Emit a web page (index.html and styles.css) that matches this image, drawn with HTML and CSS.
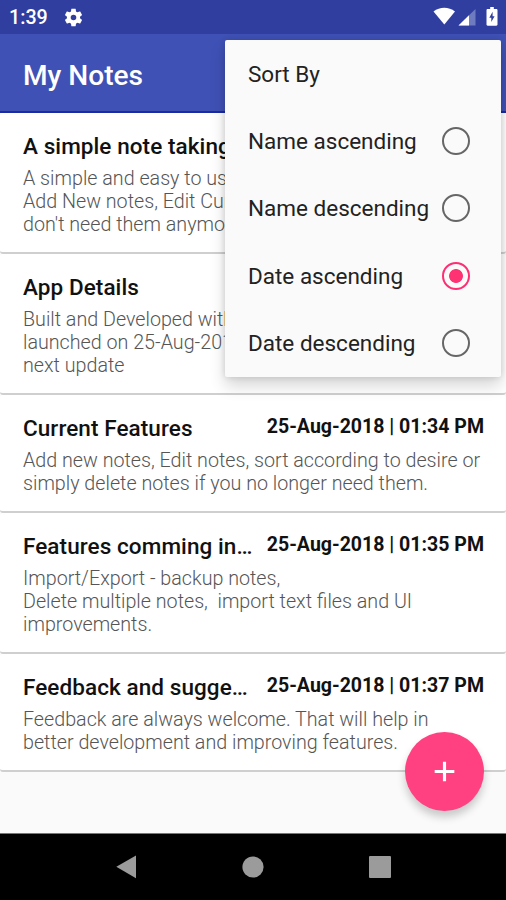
FILE: index.html
```html
<!DOCTYPE html>
<html lang="en">
<head>
<meta charset="utf-8">
<title>My Notes</title>
<link rel="stylesheet" href="styles.css">
</head>
<body>
<div class="phone">
  <div class="statusbar">
    <span class="clock">1:39</span>
    <svg class="gear" viewBox="0 0 24 24"><path fill="#fff" d="M19.43 12.98c.04-.32.07-.64.07-.98s-.03-.66-.07-.98l2.11-1.65c.19-.15.24-.42.12-.64l-2-3.46c-.12-.22-.39-.3-.61-.22l-2.49 1c-.52-.4-1.08-.73-1.69-.98l-.38-2.65C14.46 2.18 14.25 2 14 2h-4c-.25 0-.46.18-.49.42l-.38 2.65c-.61.25-1.17.59-1.69.98l-2.49-1c-.23-.09-.49 0-.61.22l-2 3.46c-.13.22-.07.49.12.64l2.11 1.65c-.04.32-.07.65-.07.98s.03.66.07.98l-2.11 1.65c-.19.15-.24.42-.12.64l2 3.46c.12.22.39.3.61.22l2.49-1c.52.4 1.08.73 1.69.98l.38 2.65c.03.24.24.42.49.42h4c.25 0 .46-.18.49-.42l.38-2.65c.61-.25 1.17-.59 1.69-.98l2.49 1c.23.09.49 0 .61-.22l2-3.46c.12-.22.07-.49-.12-.64l-2.11-1.65zM12 15.2a3.2 3.2 0 1 1 0-6.4 3.2 3.2 0 0 1 0 6.4z"/></svg>
    <svg class="tray" viewBox="0 0 66 22">
      <path fill="#fff" d="M.5 5.600C7 .6 15.500.6 22 5.600L11.300 18.500z"/>
      <path fill="#6f7bc0" d="M42.500 3v16.500H25.500z"/><path fill="#fff" d="M36 9.300v10.200H25.500z"/>
      <path fill="#fff" d="M57.200 1h3.600v2h2.500c.7 0 1.200.5 1.200 1.200v14.300c0 .7-.5 1.200-1.200 1.200h-8.600c-.7 0-1.200-.5-1.200-1.200V4.200C53.500 3.500 54 3 54.700 3h2.500z"/>
      <path fill="#303f9f" d="M59.600 5.700l-3.300 6h2v4.200l3.300-5.700h-2z"/>
    </svg>
  </div>
  <header class="appbar">My Notes</header>
  <main class="notes">
    <article class="note">
      <div class="head"><h2>A simple note taking</h2></div>
      <p>A simple and easy to use<br>Add New notes, Edit Current<br>don't need them anymore</p>
    </article>
    <article class="note">
      <div class="head"><h2>App Details</h2></div>
      <p>Built and Developed with<br>launched on 25-Aug-2018<br>next update</p>
    </article>
    <article class="note">
      <div class="head"><h2>Current Features</h2><time>25-Aug-2018 | 01:34 PM</time></div>
      <p>Add new notes, Edit notes, sort according to desire or<br>simply delete notes if you no longer need them.</p>
    </article>
    <article class="note">
      <div class="head"><h2>Features comming in…</h2><time>25-Aug-2018 | 01:35 PM</time></div>
      <p>Import/Export - backup notes,<br>Delete multiple notes, &nbsp;import text files and UI<br>improvements.</p>
    </article>
    <article class="note">
      <div class="head"><h2>Feedback and sugge…</h2><time>25-Aug-2018 | 01:37 PM</time></div>
      <p>Feedback are always welcome. That will help in<br>better development and improving features.</p>
    </article>
  </main>
  <nav class="navbar">
    <svg viewBox="0 0 24 24"><path d="M2.300 11.800L22 .5v22.800z"/></svg>
    <svg viewBox="0 0 24 24"><circle cx="12" cy="12" r="10.600"/></svg>
    <svg viewBox="0 0 24 24"><rect x="1" y="1" width="22" height="22" rx="1"/></svg>
  </nav>
  <div class="menu">
    <div class="item">Sort By</div>
    <div class="item">Name ascending<span class="radio"></span></div>
    <div class="item">Name descending<span class="radio"></span></div>
    <div class="item">Date ascending<span class="radio on"></span></div>
    <div class="item">Date descending<span class="radio"></span></div>
  </div>
  <button class="fab" aria-label="Add"><svg viewBox="0 0 22 22"><path d="M11 .7v20.600M.7 11h20.600" stroke="#fff" stroke-width="3.300"/></svg></button>
</div>
</body>
</html>
```
FILE: styles.css
```css
* { box-sizing: border-box; }
body { margin: 0; font-family: Roboto, sans-serif; }
.phone {
  position: relative;
  width: 506px;
  height: 900px;
  overflow: hidden;
  display: flex;
  flex-direction: column;
  background: #fafafa;
}
.statusbar {
  height: 34px;
  flex: none;
  display: flex;
  align-items: center;
  padding: 1px 7px 0 9px;
  background: #303f9f;
  color: #fff;
}
.clock { font-size: 19.700px; font-weight: 500; line-height: 32px; }
.gear { width: 21px; height: 21px; margin-left: 15px; }
.tray { width: 66px; height: 22px; margin-left: auto; margin-bottom: 1px; }
.appbar {
  height: 79px;
  flex: none;
  padding-left: 23px;
  background: #3f51b5;
  border-bottom: 2px solid #1a2ba3;
  color: #fff;
  font-size: 28.100px;
  font-weight: 500;
  line-height: 83px;
}
.notes { flex: 1; }
.note {
  padding: 18px 22px 16px 23px;
  background: #fff;
  border-bottom: 2px solid #cfcfcf;
  border-radius: 3px;
  white-space: nowrap;
}
.head { display: flex; justify-content: space-between; height: 36px; }
h2 { margin: 0; font-size: 22.500px; letter-spacing: .08px; font-weight: 500; line-height: 30px; color: #111; }
time { font-size: 19.550px; font-weight: 700; line-height: 27px; color: #111; }
p { margin: 0; font-size: 19.700px; font-weight: 300; line-height: 23px; color: #555; }
.navbar {
  height: 67px;
  flex: none;
  display: flex;
  justify-content: space-between;
  align-items: center;
  padding: 0 114px;
  background: #000;
  border-top: 1px solid #777;
}
.navbar svg { width: 24px; height: 24px; fill: #9b9b9b; }
.menu {
  position: absolute;
  left: 225px;
  top: 40px;
  width: 276px;
  height: 337px;
  padding: 0 31px 0 23px;
  background: #fafafa;
  border-radius: 2px;
  box-shadow: 0 9px 16px rgba(0,0,0,.16), 0 0 6px rgba(0,0,0,.14);
}
.item {
  display: flex;
  align-items: center;
  justify-content: space-between;
  height: 67.400px;
  font-size: 22.500px;
  white-space: nowrap;
  color: #222;
}
.radio { width: 28px; height: 28px; border: 2.500px solid #666; border-radius: 50%; }
.radio.on { border-color: #ff2d73; background: radial-gradient(circle, #ff3374 6.500px, transparent 7.300px); }
.fab {
  position: absolute;
  left: 405px;
  top: 732px;
  width: 79px;
  height: 79px;
  padding: 0;
  border: 0;
  border-radius: 50%;
  background: #ff4081;
  display: flex;
  align-items: center;
  justify-content: center;
  box-shadow: 0 6px 9px rgba(0,0,0,.2);
}
.fab svg { width: 21px; height: 21px; }
```
